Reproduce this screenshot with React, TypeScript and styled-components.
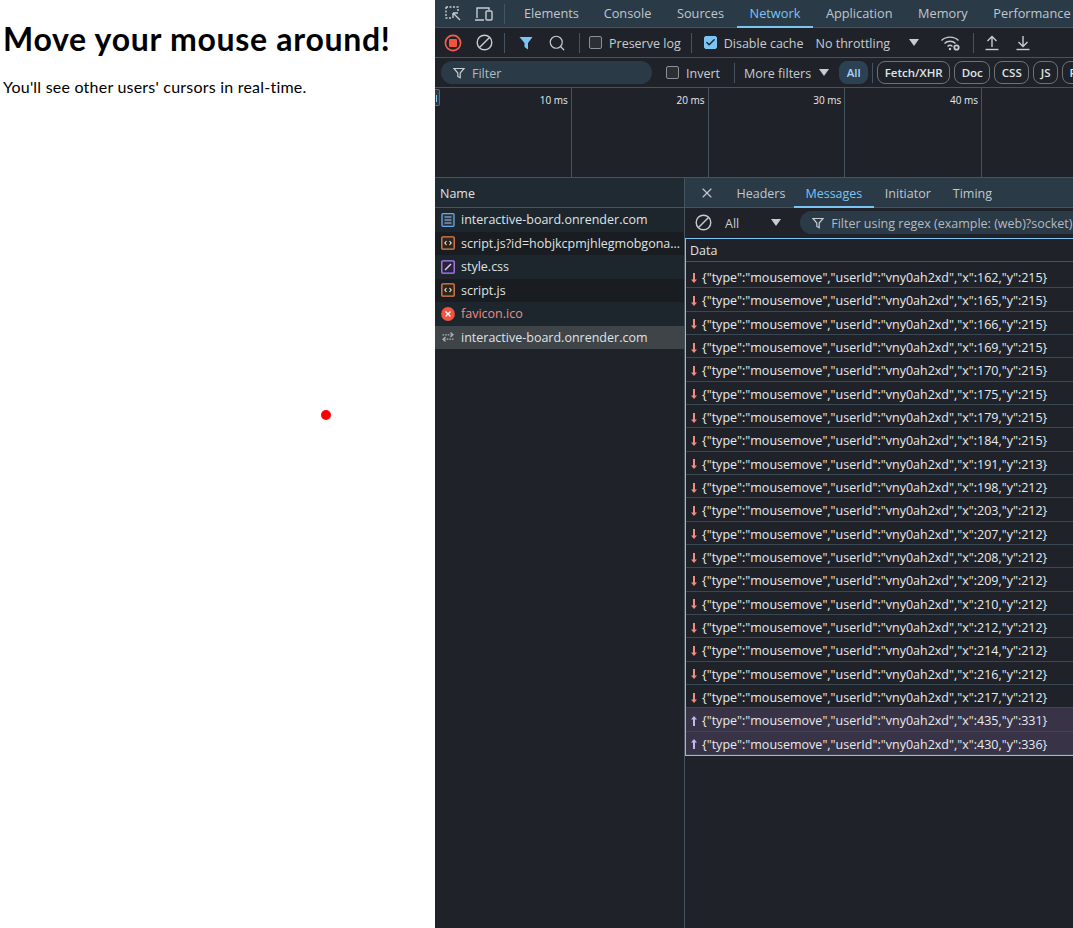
import React from "react";
import styled, { createGlobalStyle } from "styled-components";
import { Check, Search, X } from "lucide-react";

const GlobalStyle = createGlobalStyle`
  html, body { margin: 0; padding: 0; background: #fff; overflow: hidden; }
  * { box-sizing: border-box; }
`;

const Screen = styled.div`
  display: flex;
  width: 1073px;
  height: 928px;
  overflow: hidden;
`;

// page under test
const Page = styled.div`
  position: relative;
  width: 435px;
  flex: none;
  padding: 0 3px;
  background: #fff;
  color: #000;
  font-family: Lato, "Open Sans", sans-serif;
`;

const Heading = styled.h1`
  margin: 17px 0 0;
  font-size: 32px;
  line-height: 44px;
  font-weight: 700;
  letter-spacing: 0.7px;
  white-space: nowrap;
`;

const Lead = styled.p`
  margin: 15px 0 0;
  font-size: 16px;
  line-height: 22px;
  letter-spacing: 0.22px;
  white-space: nowrap;
`;

const Cursor = styled.div`
  position: absolute;
  left: 321px;
  top: 410px;
  width: 10px;
  height: 10px;
  border-radius: 50%;
  background: #ff0000;
`;

// devtools
const DevTools = styled.div`
  flex: 1;
  min-width: 0;
  display: flex;
  flex-direction: column;
  background: #1f2329;
  color: #c7ccd1;
  font-family: "Open Sans", "Noto Sans", sans-serif;
  font-size: 12.5px;
  white-space: nowrap;
`;

const TabBar = styled.div`
  height: 28px;
  flex: none;
  display: flex;
  align-items: stretch;
  background: #2a3a47;
  border-bottom: 1px solid #46545f;
`;

const IconSlot = styled.div<{ $w: number; $ml?: number }>`
  width: ${(p) => p.$w}px;
  margin-left: ${(p) => p.$ml ?? 0}px;
  flex: none;
  display: flex;
  align-items: center;
  justify-content: center;
`;

const Divider = styled.div<{ $mx?: number }>`
  width: 1px;
  height: 20px;
  flex: none;
  align-self: center;
  margin: 0 ${(p) => p.$mx ?? 0}px;
  background: #46545f;
`;

const Tab = styled.div<{ $active?: boolean; $px?: number }>`
  display: flex;
  align-items: center;
  flex: none;
  padding: 0 ${(p) => p.$px ?? 12.8}px;
  margin-bottom: -1px;
  font-size: 12.75px;
  color: ${(p) => (p.$active ? "#7cc4f4" : "#c0c7cd")};
  border-bottom: 2px solid ${(p) => (p.$active ? "#7cc4f4" : "transparent")};
`;

const DetailTab = styled(Tab)`
  padding-top: 2px;
  font-size: 12.5px;
`;

const Toolbar = styled.div`
  height: 30px;
  flex: none;
  display: flex;
  align-items: center;
  border-bottom: 1px solid #46545f;
`;

const Box = styled.span<{ $on?: boolean; $ml?: number }>`
  width: 13px;
  height: 13px;
  flex: none;
  display: inline-flex;
  align-items: center;
  justify-content: center;
  margin-left: ${(p) => p.$ml ?? 0}px;
  border-radius: 2px;
  background: ${(p) => (p.$on ? "#7cc4f4" : "#2c2f33")};
  border: 1px solid ${(p) => (p.$on ? "#7cc4f4" : "#8c9196")};
  color: #1f2329;
`;

const Label = styled.span<{ $ml?: number }>`
  flex: none;
  margin-left: ${(p) => p.$ml ?? 0}px;
  padding-top: 2px;
  color: #c7ccd1;
`;

const Caret = styled.span<{ $ml: number }>`
  width: 0;
  height: 0;
  flex: none;
  margin-left: ${(p) => p.$ml}px;
  border-left: 5px solid transparent;
  border-right: 5px solid transparent;
  border-top: 7px solid #c7ccd1;
`;

const FilterBar = styled(Toolbar)`
  padding-left: 6px;
`;

const Pill = styled.div<{ $w: number; $ml?: number }>`
  display: flex;
  align-items: center;
  flex: none;
  gap: 6px;
  width: ${(p) => p.$w}px;
  height: 23px;
  margin-left: ${(p) => p.$ml ?? 0}px;
  padding-left: 11px;
  border-radius: 12px;
  background: #2a3a47;
  color: #b4bbc2;
`;

const PillText = styled.span`
  padding-top: 2px;
`;

const Chip = styled.div<{ $active?: boolean }>`
  display: flex;
  align-items: center;
  flex: none;
  height: 23px;
  padding: 0 6.5px;
  border-radius: 8px;
  font-size: 11.5px;
  font-weight: 600;
  color: ${(p) => (p.$active ? "#a8d4f5" : "#dfe3e6")};
  background: ${(p) => (p.$active ? "#2c4153" : "transparent")};
  border: 1px solid ${(p) => (p.$active ? "#2c4153" : "#6c7278")};
`;

const Chips = styled.div`
  display: flex;
  align-items: center;
  gap: 4px;
  flex: none;
  margin-left: 10px;
`;

const Timeline = styled.div`
  position: relative;
  height: 90px;
  flex: none;
  display: flex;
  border-bottom: 1px solid #46545f;
`;

const TimeCell = styled.div`
  width: 136.75px;
  flex: none;
  padding: 5px 3px 0 0;
  text-align: right;
  font-size: 10px;
  color: #e8eaed;
  border-right: 1px solid #46545f;
`;

const Handle = styled.div`
  position: absolute;
  left: 0;
  top: 1px;
  width: 5px;
  height: 17px;
  background: #2a3a47;
  border: 1px solid #5a6a76;
  border-left: 0;
  border-radius: 0 2px 2px 0;
  &::after {
    content: "";
    position: absolute;
    left: 1px;
    top: 5px;
    width: 1px;
    height: 7px;
    background: #7cc4f4;
  }
`;

const Split = styled.div`
  flex: 1;
  min-height: 0;
  display: flex;
`;

const NamePanel = styled.div`
  width: 250px;
  flex: none;
  border-right: 1px solid #46545f;
`;

const NameHeader = styled.div`
  height: 30px;
  display: flex;
  align-items: center;
  padding: 2px 0 0 5px;
  background: #1f2a33;
  border-bottom: 1px solid #46545f;
  color: #dfe3e6;
`;

const NameRow = styled.div<{ $odd?: boolean; $selected?: boolean; $error?: boolean }>`
  height: 23.5px;
  display: flex;
  align-items: center;
  gap: 6px;
  padding-left: 6px;
  background: ${(p) => (p.$selected ? "#3f4449" : p.$odd ? "#191c20" : "#1d262d")};
  color: ${(p) => (p.$error ? "#f28b82" : "#dfe3e6")};
  svg {
    flex: none;
  }
`;

const NameText = styled.span`
  min-width: 0;
  padding-right: 4px;
  overflow: hidden;
  text-overflow: ellipsis;
`;

const Detail = styled.div`
  flex: 1;
  min-width: 0;
  display: flex;
  flex-direction: column;
`;

const DetailTabs = styled.div`
  height: 30px;
  flex: none;
  display: flex;
  align-items: stretch;
  background: #2a3a47;
  border-bottom: 1px solid #46545f;
`;

const DetailFilter = styled.div`
  height: 30px;
  flex: none;
  display: flex;
  align-items: center;
  padding-bottom: 1px;
`;

const Frame = styled.div`
  height: 518px;
  flex: none;
  border: 1px solid #7cc4f4;
  border-right: 0;
`;

const DataHead = styled.div`
  height: 23px;
  display: flex;
  align-items: center;
  padding-left: 4px;
  color: #dfe3e6;
  border-bottom: 1px solid #46545f;
`;

const MsgList = styled.div`
  padding-top: 3px;
`;

const MsgRow = styled.div<{ $sent?: boolean }>`
  height: 23.33px;
  display: flex;
  align-items: center;
  gap: 4px;
  padding: 3px 0 0 4px;
  color: #e8eaed;
  background: ${(p) => (p.$sent ? "#383346" : "transparent")};
  border-bottom: 1px solid #3a4853;
  svg {
    flex: none;
  }
`;

const stroke = { fill: "none", stroke: "#c7ccd1", strokeWidth: 1.4 };

const InspectIcon = () => (
  <svg width="18" height="18" viewBox="0 0 18 18">
    <path d="M2 2h12v5M2 2v11h5" fill="none" stroke="#c7ccd1" strokeWidth="1.4" strokeDasharray="2 1.5" />
    <path d="M9 8l7 7M9 8h5M9 8v5" {...stroke} />
  </svg>
);

const DeviceIcon = () => (
  <svg width="20" height="18" viewBox="0 0 20 18">
    <path d="M3 13V3h12v2M1 15h9" {...stroke} />
    <rect x="12" y="6" width="6" height="9" rx="1" {...stroke} />
  </svg>
);

const RecordIcon = () => (
  <svg width="18" height="18" viewBox="0 0 18 18">
    <circle cx="9" cy="9" r="7.6" fill="none" stroke="#f4604f" strokeWidth="1.6" />
    <rect x="5" y="5" width="8" height="8" rx="1" fill="#f4533f" />
  </svg>
);

const ClearIcon = () => (
  <svg width="17" height="17" viewBox="0 0 17 17">
    <circle cx="8.5" cy="8.5" r="7.3" {...stroke} />
    <path d="M13.5 3.5l-10 10" {...stroke} />
  </svg>
);

const FilterSolid = () => (
  <svg width="16" height="16" viewBox="0 0 16 16">
    <path d="M1.5 2h13L10 8v6.5L6.5 12V8z" fill="#7cc4f4" />
  </svg>
);

const FilterOutline = () => (
  <svg width="14" height="14" viewBox="0 0 14 14">
    <path d="M2 2.5h10L8.2 7v4.8L5.8 10.4V7z" fill="none" stroke="#c7ccd1" strokeWidth="1.2" />
  </svg>
);

const WifiGear = () => (
  <svg width="22" height="18" viewBox="0 0 22 18">
    <path d="M1.5 6.5C6 2 14 2 18.5 6.5M4.5 9.5c3-3 8-3 11 0M7.5 12.5c1.5-1.4 3.5-1.4 5 0" {...stroke} />
    <circle cx="10" cy="15" r="1.2" fill="#c7ccd1" />
    <circle cx="16.5" cy="13.5" r="2.2" fill="none" stroke="#c7ccd1" strokeWidth="1.8" />
  </svg>
);

const TransferIcon = ({ down }: { down?: boolean }) => (
  <svg width="16" height="18" viewBox="0 0 16 18">
    <path d={down ? "M8 2v10M3.5 8L8 12.5 12.5 8" : "M8 13V3M3.5 7L8 2.5 12.5 7"} {...stroke} />
    <path d="M1.5 15.5h13" {...stroke} />
  </svg>
);

const DocIcon = () => (
  <svg width="14" height="14" viewBox="0 0 14 14">
    <rect x="1" y="0.7" width="12" height="12.6" rx="1" fill="#26323c" stroke="#6ea8e6" strokeWidth="1.3" />
    <path d="M3.5 4h7M3.5 7h7M3.5 10h7" stroke="#a8c8f0" strokeWidth="1.2" />
  </svg>
);

const ScriptIcon = () => (
  <svg width="14" height="14" viewBox="0 0 14 14">
    <rect x="0.8" y="0.8" width="12.4" height="12.4" rx="1" fill="#2b2620" stroke="#e8804a" strokeWidth="1.3" />
    <path d="M5.5 5L3.8 7l1.7 2M8.5 5l1.7 2-1.7 2" fill="none" stroke="#f0ece4" strokeWidth="1.1" />
  </svg>
);

const StyleIcon = () => (
  <svg width="14" height="14" viewBox="0 0 14 14">
    <rect x="0.8" y="0.8" width="12.4" height="12.4" rx="1" fill="#26233a" stroke="#b880f0" strokeWidth="1.3" />
    <path d="M4 10l6-6" stroke="#e0d0f8" strokeWidth="1.4" />
  </svg>
);

const ErrorIcon = () => (
  <svg width="14" height="14" viewBox="0 0 14 14">
    <circle cx="7" cy="7" r="6.9" fill="#f4533f" />
    <path d="M4.5 4.5l5 5M9.5 4.5l-5 5" stroke="#fff" strokeWidth="1.4" />
  </svg>
);

const SocketIcon = () => (
  <svg width="14" height="14" viewBox="0 0 14 14">
    <path d="M9.5 2.5L12 4.8 9.5 7M4.5 7L2 9.2 4.5 11.5" fill="none" stroke="#aeb4ba" strokeWidth="1.2" />
    <path d="M1.5 4.8h10M12.5 9.2h-10" fill="none" stroke="#aeb4ba" strokeWidth="1.2" strokeDasharray="1.6 1" />
  </svg>
);

const Arrow = ({ sent }: { sent?: boolean }) => (
  <svg width="8" height="12" viewBox="0 0 8 12">
    {sent ? (
      <path d="M4 1L1 4.5h2V11h2V4.5h2z" fill="#c4b5f4" />
    ) : (
      <path d="M4 11L1 7.5h2V1h2v6.5h2z" fill="#f28b82" />
    )}
  </svg>
);

const requests = [
  { icon: <DocIcon />, name: "interactive-board.onrender.com" },
  { icon: <ScriptIcon />, name: "script.js?id=hobjkcpmjhlegmobgonaafepfghhlkjm" },
  { icon: <StyleIcon />, name: "style.css" },
  { icon: <ScriptIcon />, name: "script.js" },
  { icon: <ErrorIcon />, name: "favicon.ico", error: true },
  { icon: <SocketIcon />, name: "interactive-board.onrender.com", selected: true },
];

const received: [number, number][] = [
  [162, 215], [165, 215], [166, 215], [169, 215], [170, 215], [175, 215],
  [179, 215], [184, 215], [191, 213], [198, 212], [203, 212], [207, 212],
  [208, 212], [209, 212], [210, 212], [212, 212], [214, 212], [216, 212],
  [217, 212],
];
const sent: [number, number][] = [[435, 331], [430, 336]];

const message = (x: number, y: number) =>
  `{"type":"mousemove","userId":"vny0ah2xd","x":${x},"y":${y}}`;

export default function App() {
  return (
    <Screen>
      <GlobalStyle />
      <Page>
        <Heading>Move your mouse around!</Heading>
        <Lead>You'll see other users' cursors in real-time.</Lead>
        <Cursor />
      </Page>
      <DevTools>
        <TabBar>
          <IconSlot $w={36}><InspectIcon /></IconSlot>
          <IconSlot $w={26}><DeviceIcon /></IconSlot>
          <Divider $mx={7} />
          <Tab $px={12}>Elements</Tab>
          <Tab>Console</Tab>
          <Tab>Sources</Tab>
          <Tab $active>Network</Tab>
          <Tab>Application</Tab>
          <Tab>Memory</Tab>
          <Tab>Performance</Tab>
        </TabBar>
        <Toolbar>
          <IconSlot $w={36}><RecordIcon /></IconSlot>
          <IconSlot $w={26}><ClearIcon /></IconSlot>
          <Divider $mx={7} />
          <IconSlot $w={28}><FilterSolid /></IconSlot>
          <IconSlot $w={34}><Search size={18} color="#c7ccd1" strokeWidth={1.6} /></IconSlot>
          <Divider $mx={5} />
          <Box $ml={4} />
          <Label $ml={7}>Preserve log</Label>
          <Divider $mx={10} />
          <Box $on $ml={2}><Check size={11} strokeWidth={3} /></Box>
          <Label $ml={7}>Disable cache</Label>
          <Label $ml={12}>No throttling</Label>
          <Caret $ml={19} />
          <IconSlot $w={22} $ml={21}><WifiGear /></IconSlot>
          <Divider $mx={10.5} />
          <IconSlot $w={16}><TransferIcon /></IconSlot>
          <IconSlot $w={16} $ml={15}><TransferIcon down /></IconSlot>
        </Toolbar>
        <FilterBar>
          <Pill $w={211}><FilterOutline /><PillText>Filter</PillText></Pill>
          <Box $ml={14} />
          <Label $ml={7}>Invert</Label>
          <Divider $mx={14} />
          <Label $ml={-5}>More filters</Label>
          <Caret $ml={8} />
          <Chips>
            <Chip $active>All</Chip>
            <Divider />
            <Chip>Fetch/XHR</Chip>
            <Chip>Doc</Chip>
            <Chip>CSS</Chip>
            <Chip>JS</Chip>
            <Chip>Font</Chip>
          </Chips>
        </FilterBar>
        <Timeline>
          <Handle />
          {[10, 20, 30, 40, 50].map((t) => (
            <TimeCell key={t}>{t} ms</TimeCell>
          ))}
        </Timeline>
        <Split>
          <NamePanel>
            <NameHeader>Name</NameHeader>
            {requests.map((r, i) => (
              <NameRow key={i} $odd={i % 2 === 1} $selected={r.selected} $error={r.error}>
                {r.icon}
                <NameText>{r.name}</NameText>
              </NameRow>
            ))}
          </NamePanel>
          <Detail>
            <DetailTabs>
              <IconSlot $w={43}><X size={16} color="#c7ccd1" strokeWidth={1.6} /></IconSlot>
              <DetailTab $px={8.5}>Headers</DetailTab>
              <DetailTab $active $px={11.5}>Messages</DetailTab>
              <DetailTab $px={11}>Initiator</DetailTab>
              <DetailTab $px={11}>Timing</DetailTab>
            </DetailTabs>
            <DetailFilter>
              <IconSlot $w={36}><ClearIcon /></IconSlot>
              <Label $ml={4}>All</Label>
              <Caret $ml={32} />
              <Pill $w={340} $ml={19}><FilterOutline /><PillText>Filter using regex (example: (web)?socket)</PillText></Pill>
            </DetailFilter>
            <Frame>
              <DataHead>Data</DataHead>
              <MsgList>
                {received.map(([x, y]) => (
                  <MsgRow key={`${x}-${y}`}><Arrow />{message(x, y)}</MsgRow>
                ))}
                {sent.map(([x, y]) => (
                  <MsgRow key={`${x}-${y}`} $sent><Arrow sent />{message(x, y)}</MsgRow>
                ))}
              </MsgList>
            </Frame>
          </Detail>
        </Split>
      </DevTools>
    </Screen>
  );
}
